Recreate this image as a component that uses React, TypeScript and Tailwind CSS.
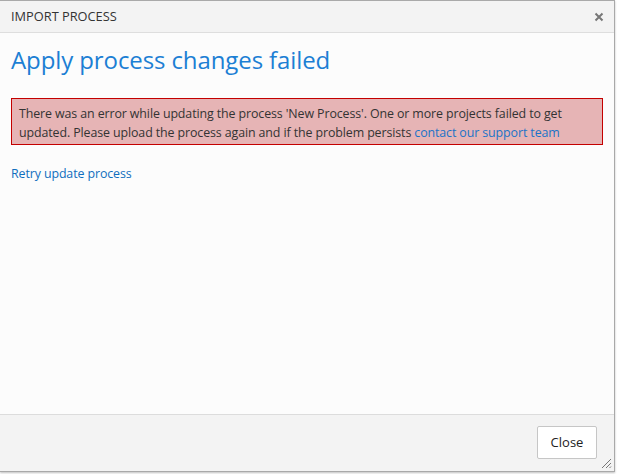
import React from "react";

export default function App() {
  return (
    <div className="w-[617px] h-[474px] bg-white" style={{ fontFamily: '"Segoe UI", "Open Sans", "Noto Sans", sans-serif' }}>
      <div className="w-[615px] h-[472px] border border-l-0 border-[#a9a9a9] bg-[#fcfcfc] flex flex-col shadow-[0_1px_2px_rgba(0,0,0,0.25)] relative">
        <div className="h-[32px] shrink-0 bg-[#f3f3f3] border-b border-[#dedede] flex items-center justify-between pl-[11px] pr-[10px]">
          <span className="text-[12.8px] text-[#333333]">IMPORT PROCESS</span>
          <svg width="10" height="10" viewBox="0 0 10 10" className="mt-[1px]">
            <path d="M1.5 1.5 L8.5 8.5 M8.5 1.5 L1.5 8.5" stroke="#777" strokeWidth="2" />
          </svg>
        </div>
        <div className="flex-1 px-[11px] pt-[12px]">
          <h1 className="text-[24px] leading-[30px] text-[#1c7fd4] font-normal tracking-[-0.1px]">Apply process changes failed</h1>
          <div className="mt-[23px] border border-[#c40000] bg-[#e6b4b5] px-[7px] pt-[5px] pb-[2px] text-[12.4px] leading-[19px] text-[#333333] tracking-[-0.1px]">
            <p>
              There was an error while updating the process 'New Process'. One or more projects failed to get updated. Please upload the process again and if the problem persists <a className="text-[#1a73c8]">contact our support team</a>
            </p>
          </div>
          <div className="mt-[19px] text-[12.4px] leading-[19px] text-[#106ebe] tracking-[-0.1px]">Retry update process</div>
        </div>
        <div className="h-[57px] shrink-0 bg-[#f3f3f3] border-t border-[#dcdcdc] flex items-start justify-end pr-[17px] pt-[11px]">
          <button className="w-[60px] h-[33px] bg-white border border-[#c6c6c6] rounded-[2px] text-[13px] text-[#222]">Close</button>
        </div>
        <svg width="12" height="12" viewBox="0 0 12 12" className="absolute right-[2px] bottom-[2px]">
          <path d="M11 2 L2 11 M11 6 L6 11 M11 9.5 L9.5 11" stroke="#777" strokeWidth="1" />
        </svg>
      </div>
    </div>
  );
}
